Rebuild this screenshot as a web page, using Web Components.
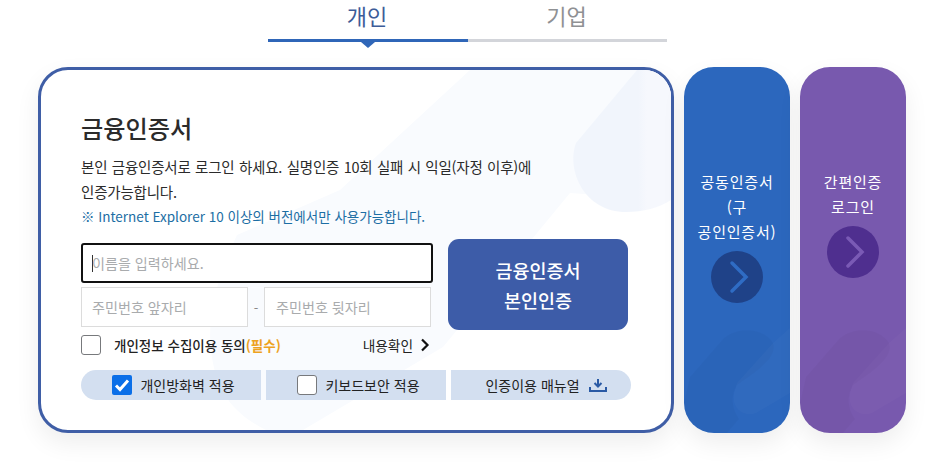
<!DOCTYPE html>
<html lang="ko">
<head>
<meta charset="utf-8">
<style>
  html, body { margin: 0; background: #fff; }
  body { width: 945px; height: 473px; overflow: hidden; font-family: "Noto Sans CJK KR", "Noto Sans", sans-serif; }
</style>
</head>
<body>
<login-page></login-page>

<script>
class TabBar extends HTMLElement {
    constructor() {
        super();
        this.attachShadow({ mode: 'open' });
    }

    connectedCallback() {
        this.shadowRoot.innerHTML = `
        <style>
            :host { display: flex; width: 399px; height: 67px; box-sizing: border-box; }
            .tab {
                position: relative;
                flex: 1;
                height: 42px;
                box-sizing: border-box;
                border-bottom: 3px solid #d3d5da;
                text-align: center;
                font-size: 22px;
                line-height: 31px;
                color: #8f9194;
            }
            .tab.on { flex: none; width: 200px; border-color: #2f66b8; color: #3d5c98; }
            .tab.on::after {
                content: '';
                position: absolute;
                left: 93px;
                top: 42px;
                border: 7px solid transparent;
                border-top: 6px solid #2f66b8;
                border-bottom: 0;
            }
            span { position: relative; left: -1px; }
        </style>
        <div class="tab on"><span>개인</span></div>
        <div class="tab"><span>기업</span></div>
        `
    }
}

class CheckItem extends HTMLElement {
    constructor() {
        super();
        this.attachShadow({ mode: 'open' });
    }

    connectedCallback() {
        const checked = this.hasAttribute('checked')
        this.shadowRoot.innerHTML = `
        <style>
            :host { display: inline-flex; align-items: center; gap: var(--check-gap, 8px); }
            .box {
                width: 20px;
                height: 20px;
                box-sizing: border-box;
                border: 1px solid #77797c;
                border-radius: 3px;
                background: #fff;
                flex: none;
            }
            .box.on { border: 0; background: #0b6fe8; border-radius: 2px; }
            svg { display: block; }
        </style>
        <div class="box ${checked ? 'on' : ''}">
            ${checked ? '<svg width="20" height="20" viewBox="0 0 20 20"><path d="M4 10.500l4 4 8-9" fill="none" stroke="#fff" stroke-width="3"/></svg>' : ''}
        </div>
        <span><slot></slot></span>
        `
    }
}

class CertPanel extends HTMLElement {
    constructor() {
        super();
        this.attachShadow({ mode: 'open' });
    }

    connectedCallback() {
        this.shadowRoot.innerHTML = `
        <style>
            :host {
                display: block;
                position: relative;
                overflow: hidden;
                width: 636px;
                height: 366px;
                box-sizing: border-box;
                padding: 40px 40px 0 40px;
                border: 3px solid #3f5ea6;
                border-radius: 30px;
                background: #fff;
                color: #222;
            }
            .deco { position: absolute; left: 0; top: 0; }
            .inner { position: relative; }
            h2 { margin: 0; font-size: 24.200px; line-height: 36px; font-weight: 500; color: #2b2b2b; }
            p { margin: 0; font-size: 14.500px; line-height: 25px; letter-spacing: -0.2px; word-spacing: 0.6px; color: #2b2b2b; }
            .title { margin-bottom: 8px; }
            .note { font-size: 13.500px; color: #1c6ea4; letter-spacing: 0; word-spacing: 0; }
            .form { display: flex; gap: 15px; margin-top: 10px; }
            .fields { width: 352px; padding-top: 4px; }
            .name {
                height: 40px;
                box-sizing: border-box;
                border: 2px solid #111;
                border-radius: 3px;
                background: #fff;
                padding-left: 9px;
                display: flex;
                align-items: center;
                font-size: 14.100px;
                color: #a9abad;
            }
            .caret { width: 1px; height: 17px; background: #333; margin-right: -1px; }
            .jumin { display: flex; align-items: center; margin-top: 4px; width: 350px; }
            .jumin div {
                width: 167px;
                height: 40px;
                box-sizing: border-box;
                border: 1px solid #dcdcdc;
                background: #fff;
                padding-left: 10px;
                line-height: 38px;
                font-size: 14.100px;
                color: #a9abad;
            }
            .jumin div:last-child { padding-left: 11px; }
            .jumin span { width: 16px; text-align: center; font-size: 13px; color: #888; }
            .go {
                width: 180px;
                height: 91px;
                border: 0;
                padding: 0;
                border-radius: 11px;
                background: #3d5ca8;
                color: #fff;
                font: 500 18.500px/30px "Noto Sans CJK KR", sans-serif;
            }
            .agree { display: flex; align-items: center; justify-content: space-between; height: 30px; width: 350px; font-size: 13.500px; font-weight: 500; --check-gap: 13px; }
            .agree b { font-weight: 700; color: #eda21f; }
            .more { display: flex; align-items: center; gap: 7px; margin-right: 1px; font-size: 13.700px; font-weight: 400; }
            .opts { display: flex; gap: 5px; margin-top: 10px; width: 550px; }
            .opt {
                flex: none;
                width: 180px;
                height: 30px;
                box-sizing: border-box;
                padding-left: 5px;
                background: #d3dff0;
                display: flex;
                align-items: center;
                justify-content: center;
                gap: 8px;
                font-size: 14px;
                color: #222;
            }
            .opt:first-child { border-radius: 15px 0 0 15px; }
            .opt:last-child { border-radius: 0 15px 15px 0; padding-left: 10px; gap: 9px; }
        </style>
        <svg class="deco" width="630" height="360" viewBox="0 0 630 360">
            <defs>
                <linearGradient id="blob" x1="520" x2="630" y1="0" y2="0" gradientUnits="userSpaceOnUse">
                    <stop offset="0.700" stop-color="#f1f5fc"/>
                    <stop offset="0.780" stop-color="#f6f8fd"/>
                    <stop offset="1" stop-color="#f6f8fd"/>
                </linearGradient>
            </defs>
            <path d="M429 0 L299 120 L196 165 C170 220 165 260 172 293 C178 325 195 345 225 360 H262 L402 277 L529 123 L630 130 V0 Z" fill="#f9fbfe"/>
            <path d="M596 0 L535 73 C525 100 543 142 585 142 C602 142 618 138 630 130 V0 Z" fill="url(#blob)"/>
        </svg>
        <div class="inner">
            <h2 class="title">금융인증서</h2>
            <p>본인 금융인증서로 로그인 하세요. 실명인증 10회 실패 시 익일(자정 이후)에<br>인증가능합니다.</p>
            <p class="note">※ Internet Explorer 10 이상의 버전에서만 사용가능합니다.</p>
            <div class="form">
                <div class="fields">
                    <div class="name"><i class="caret"></i>이름을 입력하세요.</div>
                    <div class="jumin">
                        <div>주민번호 앞자리</div>
                        <span>-</span>
                        <div>주민번호 뒷자리</div>
                    </div>
                </div>
                <button class="go">금융인증서<br>본인인증</button>
            </div>
            <div class="agree">
                <check-item>개인정보 수집이용 동의<b>(필수)</b></check-item>
                <span class="more">내용확인
                    <svg width="10" height="14" viewBox="0 0 10 14"><path d="M2 1.500L7.500 7 2 12.500" fill="none" stroke="#111" stroke-width="2.200"/></svg>
                </span>
            </div>
            <div class="opts">
                <div class="opt"><check-item checked>개인방화벽 적용</check-item></div>
                <div class="opt"><check-item>키보드보안 적용</check-item></div>
                <div class="opt">인증이용 매뉴얼
                    <svg width="18" height="14" viewBox="0 0 18 14"><path d="M9 1v7M5.500 5L9 8.500 12.500 5M1 9v4h16V9" fill="none" stroke="#2a5aa5" stroke-width="2"/></svg>
                </div>
            </div>
        </div>
        `
    }
}

class SideCard extends HTMLElement {
    constructor() {
        super();
        this.attachShadow({ mode: 'open' });
    }

    connectedCallback() {
        this.shadowRoot.innerHTML = `
        <style>
            :host {
                display: flex;
                flex-direction: column;
                align-items: center;
                position: relative;
                overflow: hidden;
                width: 106px;
                height: 366px;
                box-sizing: border-box;
                padding-top: 102px;
                border-radius: 30px;
                background: var(--card);
                color: #fff;
                text-align: center;
                font-size: 15px;
                line-height: 25px;
                letter-spacing: 0.8px;
            }
            .deco { position: absolute; left: 0; bottom: 0; }
            .text { position: relative; }
            .go {
                position: relative;
                width: 52px;
                height: 52px;
                margin-top: 7px;
                border-radius: 50%;
                background: var(--circle);
            }
            svg { display: block; }
        </style>
        <svg class="deco" width="106" height="110" viewBox="0 0 106 110">
            <path d="M0 80 L6 54 L40 15 C55 3 80 5 89 20 C92 30 85 38 70 50 L53 62 C47 72 47 85 55 96 L43 110 H0 Z" fill="#000" opacity=".025"/>
            <path d="M53 60 L89 20 L106 5 V70 L72 90 C60 95 45 85 51 67 Z" fill="#fff" opacity=".025"/>
        </svg>
        <div class="text"><slot></slot></div>
        <div class="go">
            <svg width="52" height="52" viewBox="0 0 52 52"><path d="M21 12l14 14-14 14" fill="none" stroke="var(--chev)" stroke-width="3.500" stroke-linecap="round"/></svg>
        </div>
        `
    }
}

class LoginPage extends HTMLElement {
    constructor() {
        super();
        this.attachShadow({ mode: 'open' });
    }

    connectedCallback() {
        this.shadowRoot.innerHTML = `
        <style>
            :host { display: block; padding-left: 38px; }
            tab-bar { margin-left: 230px; }
            .row { display: flex; gap: 10px; }
            .row > * { box-shadow: 0 10px 24px rgba(0,0,0,.07); }
        </style>
        <tab-bar></tab-bar>
        <div class="row">
            <cert-panel></cert-panel>
            <side-card style="--card:#2c67bd;--circle:#1f4288;--chev:#2f6cc4">공동인증서<br>(구<br>공인인증서)</side-card>
            <side-card style="--card:#7859ae;--circle:#4f2f8f;--chev:#7a5ab5">간편인증<br>로그인</side-card>
        </div>
        `
    }
}

customElements.define('tab-bar', TabBar);
customElements.define('check-item', CheckItem);
customElements.define('cert-panel', CertPanel);
customElements.define('side-card', SideCard);
customElements.define('login-page', LoginPage);
</script>
</body>
</html>
